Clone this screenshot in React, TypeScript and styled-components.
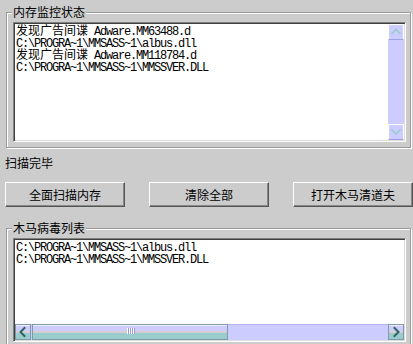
import React from 'react';
import styled, { createGlobalStyle } from 'styled-components';

const GlobalStyle = createGlobalStyle`
  html, body {
    margin: 0;
    padding: 0;
    background: #cccccc;
  }
  body {
    font-family: "Noto Sans CJK SC", "Liberation Sans", sans-serif;
    font-size: 12px;
    color: #000000;
  }
`;

const Window = styled.div`
  width: 413px;
  height: 344px;
  overflow: hidden;
  background: #cccccc;
  display: flex;
  flex-direction: column;
`;

const GroupBox = styled.div<{ $top: number; $height: number }>`
  position: relative;
  flex-shrink: 0;
  box-sizing: border-box;
  width: 405px;
  height: ${(p) => p.$height}px;
  margin: ${(p) => p.$top}px 0 0 6px;
  padding: 9px 0 0 6px;
  border: 1px solid #999999;
  box-shadow: inset 1px 1px 0 #ffffff, 1px 1px 0 #ffffff;
`;

const GroupTitle = styled.span`
  position: absolute;
  top: -8px;
  left: 5px;
  padding: 0 1px;
  line-height: 14px;
  background: #cccccc;
  white-space: nowrap;
`;

const ListBox = styled.div<{ $height: number; $dir: 'row' | 'column' }>`
  box-sizing: border-box;
  width: 393px;
  height: ${(p) => p.$height}px;
  padding: 1px;
  display: flex;
  flex-direction: ${(p) => p.$dir};
  background: #ffffff;
  border: 1px solid;
  border-color: #808080 #ffffff #ffffff #808080;
  box-shadow: inset 1px 1px 0 #404040, inset -1px -1px 0 #dcdcdc;
`;

const Lines = styled.div`
  flex: 1;
  min-width: 0;
  min-height: 0;
  overflow: hidden;
  padding-left: 1px;
`;

const Line = styled.div`
  height: 12px;
  line-height: 12px;
  white-space: nowrap;
`;

const Cjk = styled.span`
  font-family: "Noto Sans CJK SC", sans-serif;
  font-size: 12px;
`;

const Latin = styled.span`
  font-family: "Liberation Mono", monospace;
  font-size: 12px;
  letter-spacing: -1.2px;
`;

const VScroll = styled.div`
  width: 16px;
  display: flex;
  flex-direction: column;
  justify-content: space-between;
  background: #ccccff;
`;

const VScrollButton = styled.div`
  box-sizing: border-box;
  width: 16px;
  height: 16px;
  display: flex;
  align-items: center;
  justify-content: center;
  background: #ccccff;
  border: 1px solid #ffffff;
  border-bottom-color: #9f9fe0;
`;

const HScroll = styled.div`
  height: 16px;
  display: flex;
  box-sizing: border-box;
  background: #ccccff;
  border-top: 1px solid #b4b4ee;
`;

const bar = `
  box-sizing: border-box;
  border: 1px solid #7d9aa6;
  background: linear-gradient(
    to bottom,
    #eeeeff 0,
    #eeeeff 1px,
    #ccccff 1px,
    #ccccff 46%,
    #d6cdd0 46%,
    #d6cdd0 56%,
    #99cccc 56%,
    #99cccc 100%
  );
`;

const HScrollButton = styled.div`
  ${bar}
  width: 16px;
  height: 16px;
  margin-top: -1px;
  display: flex;
  align-items: center;
  justify-content: center;
`;

const Track = styled.div`
  flex: 1;
  display: flex;
  padding-left: 1px;
`;

const Thumb = styled.div`
  ${bar}
  width: 196px;
  height: 16px;
  margin-top: -1px;
  display: flex;
  align-items: center;
  justify-content: center;
  gap: 1px;
`;

const Grip = styled.span`
  width: 1px;
  height: 6px;
  margin-top: -3px;
  background: #ffffff;
  box-shadow: 1px 0 0 #9a9ad0;
`;

const StatusText = styled.div`
  flex-shrink: 0;
  margin-top: 9px;
  padding-left: 5px;
  height: 12px;
  line-height: 12px;
`;

const ButtonRow = styled.div`
  flex-shrink: 0;
  display: flex;
  gap: 24px;
  margin-top: 13px;
  padding-left: 5px;
`;

const Button = styled.button`
  flex-shrink: 0;
  box-sizing: border-box;
  width: 120px;
  height: 25px;
  padding: 0;
  background: #cccccc;
  color: #000000;
  font-family: "Noto Sans CJK SC", sans-serif;
  font-size: 12px;
  border: 1px solid;
  border-color: #ffffff #555555 #555555 #ffffff;
  box-shadow: inset -1px -1px 0 #888888;
`;

const Chevron = ({ dir, color, width = 1.6 }: { dir: 'up' | 'down' | 'left' | 'right'; color: string; width?: number }) => {
  const d = {
    up: 'M3 8.5 L7 4.5 L11 8.5',
    down: 'M3 5 L7 9 L11 5',
    left: 'M8.5 3 L4.5 7 L8.5 11',
    right: 'M5.5 3 L9.5 7 L5.5 11',
  }[dir];
  return (
    <svg width="14" height="14" viewBox="0 0 14 14">
      <path d={d} fill="none" stroke={color} strokeWidth={width} strokeLinecap="square" />
    </svg>
  );
};

const TextLine = ({ text }: { text: string }) => (
  <Line>
    {text
      .split(/([\u4e00-\u9fff]+)/)
      .filter((part) => part.length > 0)
      .map((part, i) =>
        /[\u4e00-\u9fff]/.test(part) ? <Cjk key={i}>{part}</Cjk> : <Latin key={i}>{part}</Latin>
      )}
  </Line>
);

const monitorLines = [
  '发现广告间谍 Adware.MM63488.d',
  'C:\\PROGRA~1\\MMSASS~1\\albus.dll',
  '发现广告间谍 Adware.MM118784.d',
  'C:\\PROGRA~1\\MMSASS~1\\MMSSVER.DLL',
];

const trojanLines = ['C:\\PROGRA~1\\MMSASS~1\\albus.dll', 'C:\\PROGRA~1\\MMSASS~1\\MMSSVER.DLL'];

const App = () => {
  return (
    <Window>
      <GlobalStyle />
      <GroupBox $top={12} $height={136}>
        <GroupTitle>内存监控状态</GroupTitle>
        <ListBox $height={120} $dir="row">
          <Lines>
            {monitorLines.map((line, i) => (
              <TextLine key={i} text={line} />
            ))}
          </Lines>
          <VScroll>
            <VScrollButton>
              <Chevron dir="up" color="#99cccc" />
            </VScrollButton>
            <VScrollButton>
              <Chevron dir="down" color="#99cccc" />
            </VScrollButton>
          </VScroll>
        </ListBox>
      </GroupBox>

      <StatusText>扫描完毕</StatusText>

      <ButtonRow>
        <Button>全面扫描内存</Button>
        <Button>清除全部</Button>
        <Button>打开木马清道夫</Button>
      </ButtonRow>

      <GroupBox $top={21} $height={130}>
        <GroupTitle>木马病毒列表</GroupTitle>
        <ListBox $height={104} $dir="column">
          <Lines>
            {trojanLines.map((line, i) => (
              <TextLine key={i} text={line} />
            ))}
          </Lines>
          <HScroll>
            <HScrollButton>
              <Chevron dir="left" color="#2f6464" width={2} />
            </HScrollButton>
            <Track>
              <Thumb>
                <Grip />
                <Grip />
                <Grip />
                <Grip />
              </Thumb>
            </Track>
            <HScrollButton>
              <Chevron dir="right" color="#2f6464" width={2} />
            </HScrollButton>
          </HScroll>
        </ListBox>
      </GroupBox>
    </Window>
  );
};

export default App;
